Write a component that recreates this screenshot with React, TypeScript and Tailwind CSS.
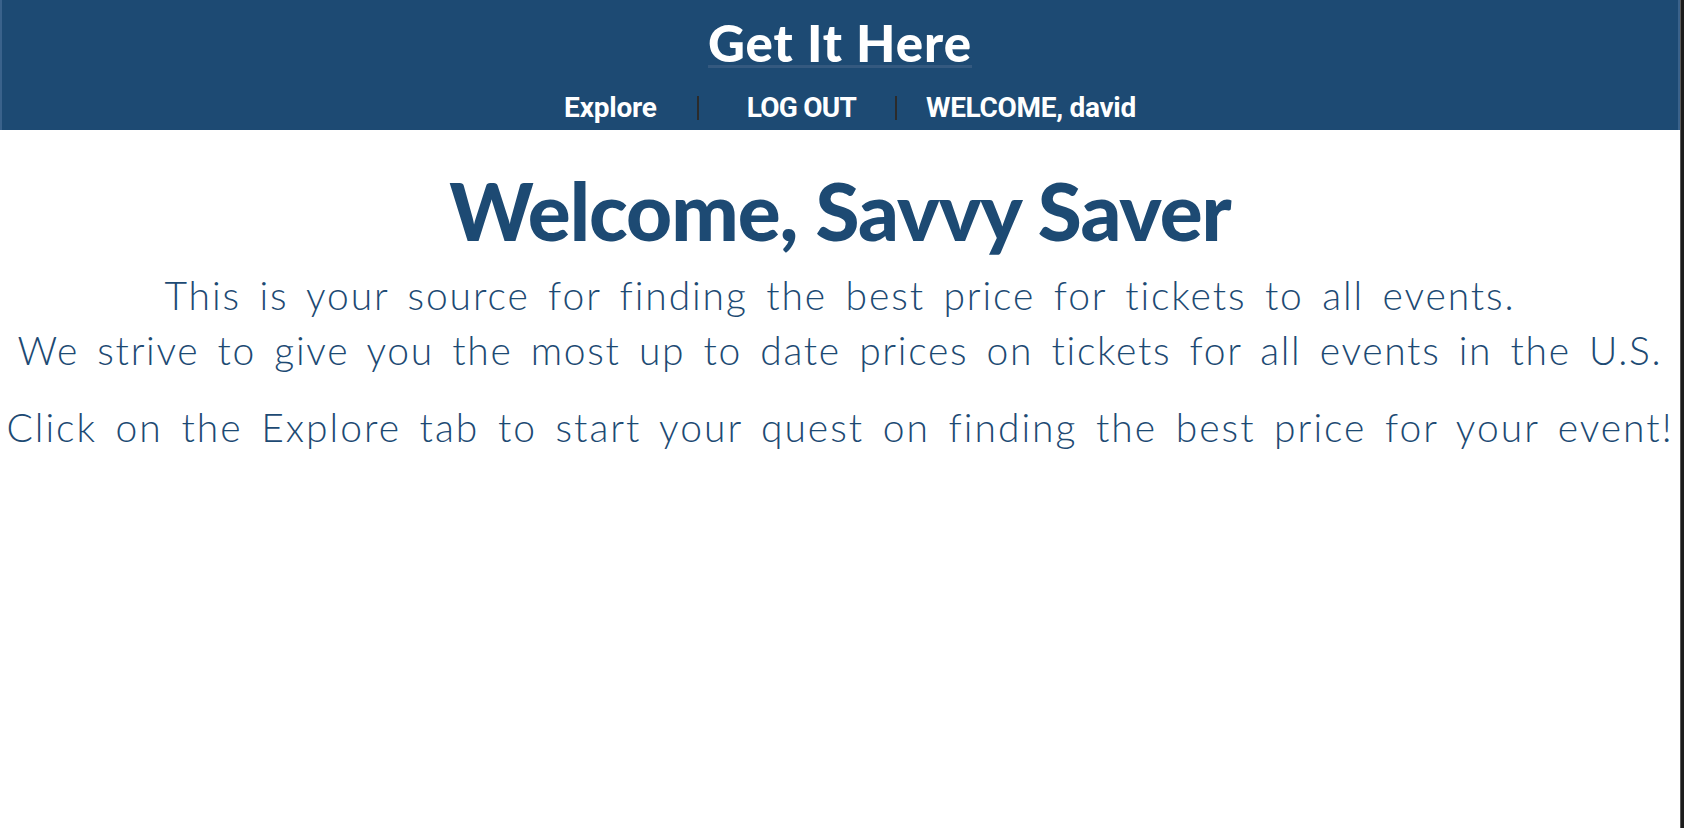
import React from "react";

const navItems = ["Explore", "LOG OUT", "WELCOME, david"];

const Header: React.FC = () => {
  return (
    <header className="h-[130px] bg-[#1d4a73] border-l-2 border-r-2 border-[#3a628b] flex flex-col items-center">
      <h1 className="mt-[20px] inline-block border-b-[3px] border-[#34597f] text-white font-black text-[51px] leading-[45px] tracking-[1px] font-['Lato',sans-serif]">
        Get It Here
      </h1>
      <nav className="mt-[26px] pl-[20px] flex items-center text-white font-bold text-[28px] leading-[28px] font-['Roboto',sans-serif]">
        <a href="#" className="tracking-[-0.2px]">{navItems[0]}</a>
        <span className="ml-[40px] w-[2px] h-[24px] bg-[#2b2b2b]" />
        <a href="#" className="ml-[48px] tracking-[-0.8px]">{navItems[1]}</a>
        <span className="ml-[39px] w-[2px] h-[24px] bg-[#2b2b2b]" />
        <span className="ml-[29px] tracking-[-0.3px]">{navItems[2]}</span>
      </nav>
    </header>
  );
};

export default function App() {
  return (
    <div className="flex h-screen w-full bg-white overflow-hidden">
      <div className="flex-1 flex flex-col">
        <Header />
        <main className="flex flex-col items-center text-center text-[#1d4a73]">
          <h2 className="mt-[40px] font-black text-[80px] leading-[80px] tracking-[-1px] font-['Lato',sans-serif]">
            Welcome, Savvy Saver
          </h2>
          <p className="mt-[18px] text-[39px] leading-[55px] font-light tracking-[1.9px] [word-spacing:6px] whitespace-nowrap font-['Lato',sans-serif]">
            This is your source for finding the best price for tickets to all events.
            <br />
            <span className="tracking-[1.7px]">
              We strive to give you the most up to date prices on tickets for all events in the U.S.
            </span>
          </p>
          <p className="mt-[22px] text-[39px] leading-[55px] font-light tracking-[2px] [word-spacing:6px] whitespace-nowrap font-['Lato',sans-serif]">
            Click on the Explore tab to start your quest on finding the best price for your event!
          </p>
        </main>
      </div>
      <div className="w-[4px] bg-[#1c1c1c] border-l border-[#5a5a5a]" />
    </div>
  );
}
